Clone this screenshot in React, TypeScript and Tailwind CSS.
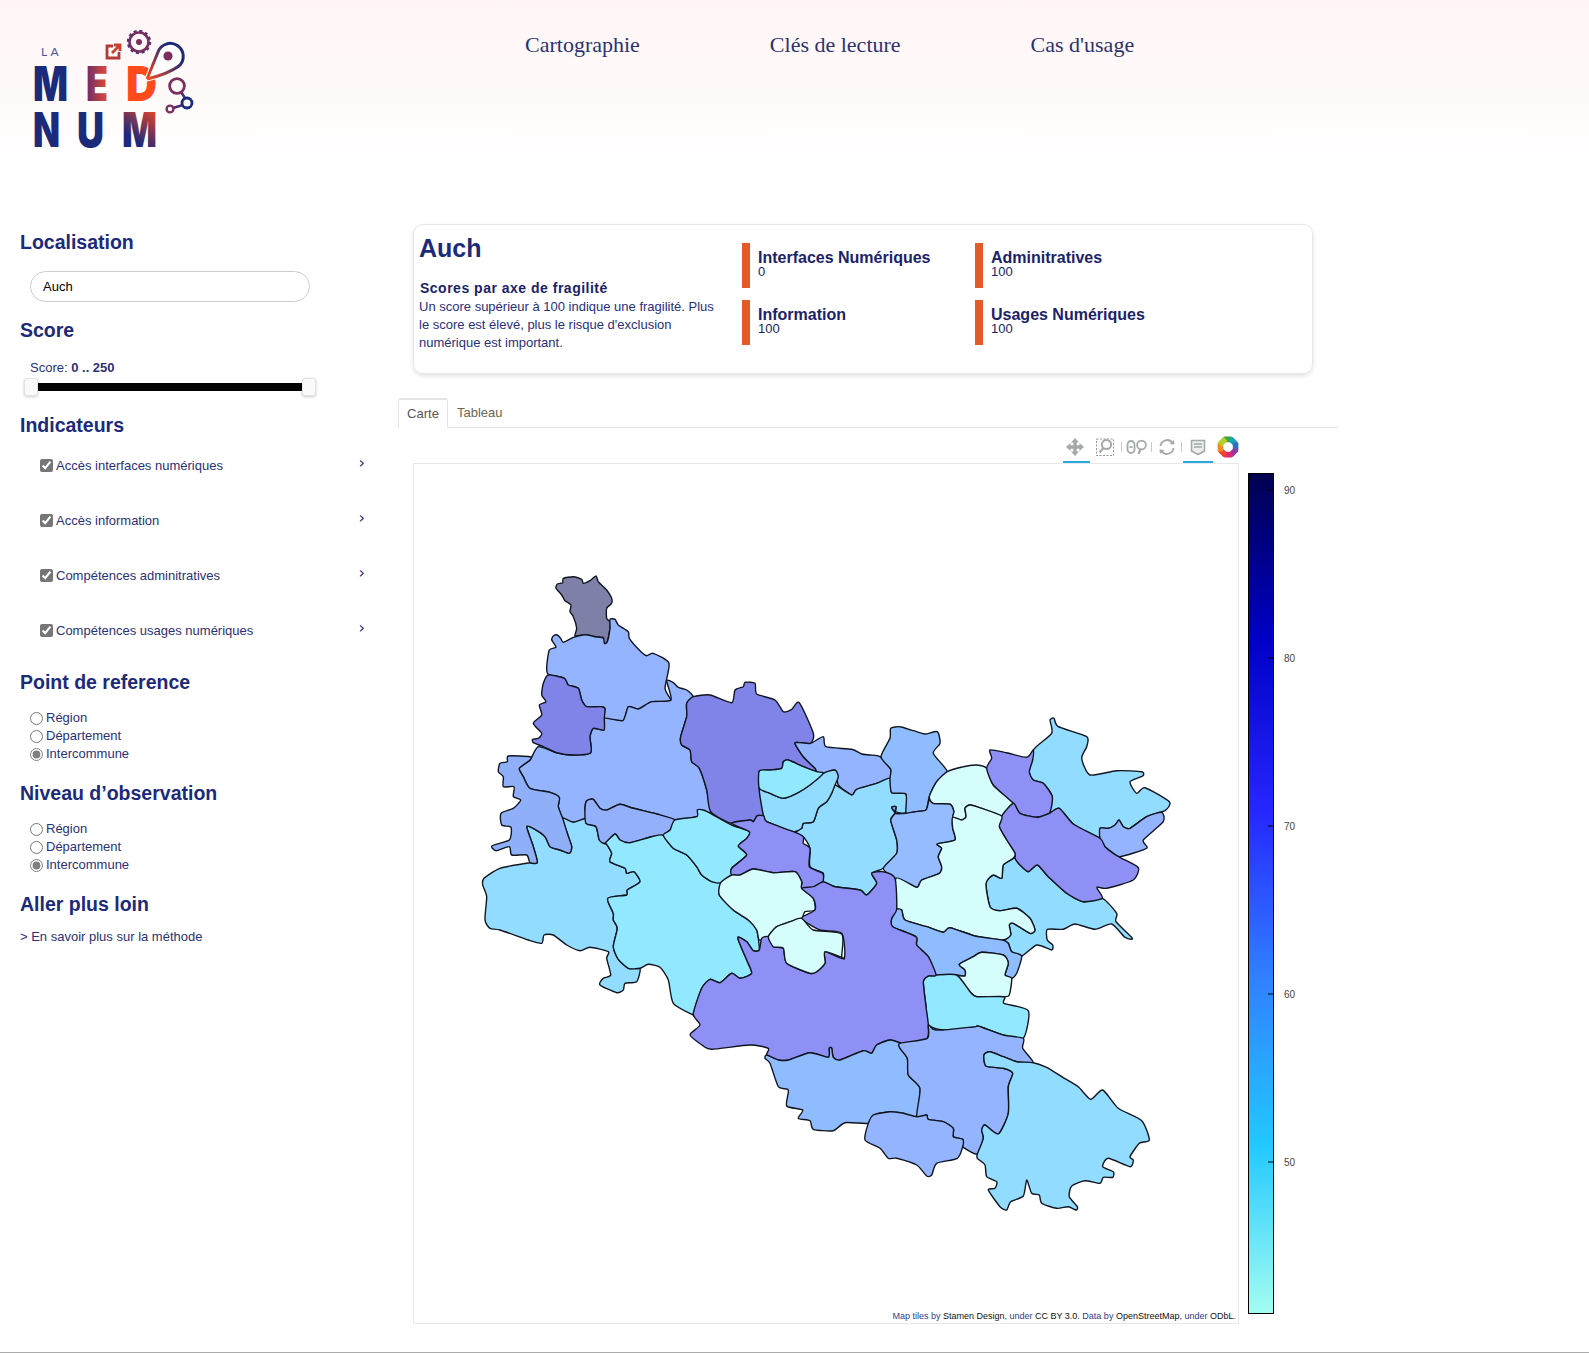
const NAVY = "text-[#1b2a7a]";

// crop origins, the outlines below were read off 3x crops
const ORIGINS: Record<string, [number, number]> = {
  a: [470, 560],
  b: [800, 700],
  c: [670, 940],
  d: [590, 920],
};

// closed Catmull-Rom through the traced points, keeps junctions on the shared borders
const toPath = (segs: [string, string][]) => {
  const pts = segs.flatMap(([crop, raw]) => {
    const [ox, oy] = ORIGINS[crop];
    return raw.split(" ").map((p) => {
      const [x, y] = p.split(",").map(Number);
      return [ox + x / 3, oy + y / 3];
    });
  });
  const n = pts.length;
  const k = 0.11;
  let d = `M${pts[0][0].toFixed(1)} ${pts[0][1].toFixed(1)}`;
  for (let i = 0; i < n; i++) {
    const p0 = pts[(i - 1 + n) % n];
    const p1 = pts[i];
    const p2 = pts[(i + 1) % n];
    const p3 = pts[(i + 2) % n];
    const c1x = p1[0] + (p2[0] - p0[0]) * k;
    const c1y = p1[1] + (p2[1] - p0[1]) * k;
    const c2x = p2[0] - (p3[0] - p1[0]) * k;
    const c2y = p2[1] - (p3[1] - p1[1]) * k;
    d += `C${c1x.toFixed(1)} ${c1y.toFixed(1)} ${c2x.toFixed(1)} ${c2y.toFixed(1)} ${p2[0].toFixed(1)} ${p2[1].toFixed(1)}`;
  }
  return d + "Z";
};

const REGIONS: { fill: string; segs: [string, string][] }[] = [
  { fill: "#7e80a8", segs: [["a", "280,55 310,50 335,58 340,70 360,62 378,48 385,65 410,90 425,115 425,130 410,145 410,175 420,185 420,205 410,250 400,245 400,232 375,230 345,224 315,228 320,205 310,170 300,155 303,135 285,122 275,105 258,85 262,72 278,68"]] },
  { fill: "#94b4ff", segs: [["a", "262,225 272,235 280,247 310,232 345,224 375,230 400,235 403,250 412,245 420,205 420,178 435,178 445,195 475,215 478,235 510,272 530,287 550,280 597,310 585,385 603,420 590,425 545,425 505,447 475,440 465,475 458,482 403,475 405,447 395,440 350,440 335,420 325,385 295,375 283,355 235,343 230,320 238,270 258,262 245,240 250,228"]] },
  { fill: "#94b4ff", segs: [["a", "205,560 260,578 310,585 362,578 360,530 370,505 402,510 403,475 458,482 475,440 505,447 545,425 603,420 590,362 610,368 625,382 650,390 670,410 650,430 650,470 632,530 635,555 660,570 665,605 688,625 710,690 722,755 680,770 615,780 560,762 490,745 450,733 410,750 390,745 370,718 350,722 345,745 347,775 310,787 278,775 265,740 268,712 240,697 180,685 160,650 148,625 180,600"]] },
  { fill: "#8084e8", segs: [["a", "235,345 283,355 295,375 325,385 335,420 350,440 395,440 405,447 403,475 402,510 370,505 360,530 362,578 310,585 260,578 220,560 190,548 188,538 205,535 215,520 190,490 215,465 208,435 228,425 215,405 220,370"]] },
  { fill: "#92dcff", segs: [["a", "170,800 195,808 225,830 240,860 270,870 298,880 305,860 292,820 278,775 310,787 347,775 348,790 378,800 388,840 410,853 425,880 420,905 465,925 470,940 492,935 510,965 472,990 470,1005 413,1015 430,1060"], ["d", "70,0 82,25 70,80 85,118 115,145 150,145 140,185 105,190 100,210 80,218 30,195 40,175 62,165 50,115 55,95 0,82"], ["a", "330,1172 290,1155 250,1125 222,1125 215,1150 175,1140 90,1110 60,1105 45,1080 50,1010 38,975 42,955 90,925 180,908 202,907 190,860"]] },
  { fill: "#8fb0f8", segs: [["a", "115,588 180,590 180,600 148,625 160,650 180,685 240,697 268,712 265,740 278,775 292,820 305,860 298,880 270,870 240,860 225,830 195,808 170,800 190,860 202,907 180,908 170,885 125,885 118,860 78,872 66,857 118,840 123,802 95,795 93,760 130,745 152,720 130,710 132,680 100,680 100,650 85,635 90,610 112,605"]] },
  { fill: "#94b0fa", segs: [["a", "345,745 350,722 370,718 390,745 410,750 450,733 490,745 560,762 615,780 600,810 580,826 545,830 480,848 450,840 435,822 405,850 388,840 378,800 348,790"]] },
  { fill: "#92e8ff", segs: [["a", "405,850 435,822 450,840 480,848 545,830 580,826 610,865 650,885 680,920 695,945 725,965 752,968 748,1005 790,1050 835,1080 860,1110 868,1170 850,1172 830,1145 803,1133"], ["c", "230,60 245,100 210,115 185,100 150,128 120,118 95,145 70,222"], ["d", "310,285 250,250 235,180 210,142 175,133 150,145 115,145 85,118 70,80 82,25 70,0"], ["a", "430,1060 413,1015 470,1005 472,990 510,965 492,935 470,940 465,925 420,905 425,880 410,853"]] },
  { fill: "#92e8ff", segs: [["a", "615,780 680,770 682,750 700,750 725,762 785,795 838,815 830,835 805,858 830,885 785,925 785,945 752,968 725,965 695,945 680,920 650,885 610,865 580,826 600,810"]] },
  { fill: "#8084e8", segs: [["a", "670,410 720,405 785,428 795,390 820,380 825,367 855,370 860,402 915,420 940,455 965,448 988,428 1030,520 1022,550 995,548 975,550 1000,590 1035,625 1040,635 1000,620 955,600 940,605 935,625 900,630 868,633 868,685 880,765 862,767 850,785 840,780 785,790 722,755 710,690 688,625 665,605 660,570 635,555 632,530 650,470 650,430"]] },
  { fill: "#94b4ff", segs: [["a", "975,550 995,548 1022,550 1060,530 1068,560 1145,568 1175,582"], ["b", "210,165 240,170 272,208 270,235 230,250 170,268 155,285 115,255 105,210 70,220 50,215"], ["a", "1035,625 1000,590"]] },
  { fill: "#92dcff", segs: [["b", "105,255 155,285 170,268 230,250 270,235 275,278 318,282 318,338 285,335 275,322 288,320 285,340 272,360 290,420 290,460 250,505 215,520 230,550 200,585 180,570 105,560 70,545 70,520 30,500 30,445 10,410 -20,395 5,385 10,370 40,365 55,325 80,305 95,280"]] },
  { fill: "#92dcff", segs: [["a", "868,685 900,700 940,715 980,700 1020,675 1060,640 1095,630 1105,650 1095,675 1085,700 1070,725 1045,745 1030,785 1000,790 995,805 970,815 890,785 880,765"]] },
  { fill: "#92e8ff", segs: [["a", "868,633 900,630 935,625 940,605 955,600 1000,620 1040,635 1060,640 1020,675 980,700 940,715 900,700 868,685"]] },
  { fill: "#8f90f6", segs: [["a", "785,790 840,780 850,785 862,767 882,768 890,785 970,815 1000,830 1000,850 1020,865 1018,920 1058,940 1058,965 1030,985 995,985 995,965 975,935 910,938 850,927 810,945 785,945 785,925 830,885 805,858 830,835 838,815"]] },
  { fill: "#d5fdfb", segs: [["a", "785,945 810,945 850,927 910,938 975,935 995,965 995,985 1030,1015 1035,1050 1005,1055 995,1075 960,1085 920,1100 895,1130 868,1140 860,1110 835,1080 790,1050 748,1005 752,968"]] },
  { fill: "#8fbcff", segs: [["b", "272,85 300,80 340,92 375,102 412,95 420,130 400,160 442,215 410,245 388,290 378,330 345,335 318,340 318,282 275,278 270,235 272,208 243,170 270,115"]] },
  { fill: "#94bcff", segs: [["b", "275,322 288,320 285,340 318,340 345,335 378,330 388,298 400,310 450,312 462,335 458,352 458,385 465,420 412,432 425,445 415,470 425,500 418,520 365,540 350,562 285,535 250,505 290,460 290,420 272,360 285,340"]] },
  { fill: "#d5fdfb", segs: [["b", "442,215 490,200 530,195 560,205 580,255 640,310 605,348 545,325 510,315 495,325 498,350 485,360 458,352 462,335 450,312 400,310 388,290 410,245"]] },
  { fill: "#92dcff", segs: [["b", "750,60 762,55 775,80 860,110 860,140 845,175 870,225 950,212 1025,215 1028,228 990,245 1010,280 1035,263 1108,305 1095,332 1040,350 990,385 970,380 957,360 945,375 925,385 900,385 900,415 820,372 778,325 748,340 757,290 730,250 700,240 688,215 700,150 755,100"]] },
  { fill: "#8f90f6", segs: [["b", "570,150 620,158 680,172 700,150 698,180 688,215 700,240 730,250 757,290 748,340 710,352 660,340 640,310 580,255 560,205 575,175"]] },
  { fill: "#94b4ff", segs: [["b", "900,385 925,385 945,375 957,360 970,380 990,385 1040,350 1085,337 1090,365 1030,420 1040,445 960,470 940,460 915,440 900,415"]] },
  { fill: "#92dcff", segs: [["b", "645,475 660,495 685,515 712,495 745,530 800,580 850,605 907,595 950,640 948,665 997,715 975,712 935,672 885,688 825,672 790,688 742,688 742,720 758,735 755,750 710,735 665,768 635,755 625,730 608,720 632,705 628,675 640,670 690,700 705,690 690,655 650,625 600,632 570,620 558,550 580,525 605,535 610,495 640,475"]] },
  { fill: "#8f90f6", segs: [["b", "640,310 660,340 710,352 748,340 778,325 820,372 900,415 915,440 940,460 965,475 1015,503 1000,540 920,565 890,562 907,595 850,605 800,580 745,530 712,495 685,515 660,495 645,475 645,460 620,420 598,380 605,348"]] },
  { fill: "#d5fdfb", segs: [["b", "458,352 485,360 498,350 495,325 510,315 545,325 605,348 598,380 620,420 645,460 640,475 610,495 605,535 580,525 558,550 570,620 600,632 650,625 690,655 705,690 690,700 640,670 628,675 632,705 608,720 525,708 450,683 430,697 380,680 315,660 305,630 290,628 288,535 350,562 365,540 418,520 425,500 415,470 425,445 412,432 465,420 458,385"]] },
  { fill: "#8fbcff", segs: [["b", "288,628 305,630 315,660 380,680 430,697 450,683 525,708 608,720 625,730 635,755 665,768 650,820 635,835 615,825 625,790 610,765 545,757 520,770 478,793 495,810 495,828 470,825 408,825 385,770 350,735 348,710 278,680 275,655"]] },
  { fill: "#d5fdfb", segs: [["b", "478,793 520,770 545,757 610,765 625,790 615,825 635,835 628,885 612,890 530,890 510,875 475,830 495,828 495,810"]] },
  { fill: "#92e8ff", segs: [["b", "408,825 470,825 510,875 530,890 612,890 612,910 685,932 670,1015 610,1005 540,980 510,985 430,990 385,975 378,920 370,845 385,828"]] },
  { fill: "#8f90f6", segs: [["b", "215,520 250,515 285,535 290,628 275,655 278,680 348,710 350,735 385,770 408,825 385,828 370,845 378,920 385,975 380,1017"], ["c", "700,310 660,300 620,315 605,340 580,332 510,360 490,352 485,325 478,325 475,352 420,338 355,360 325,360 290,345 295,325 240,315 125,328 100,318 60,285 90,255 70,222 95,145 120,118 150,128 185,100 210,115 245,100 230,60"], ["a", "803,1133 830,1145 850,1172 868,1170 875,1135 895,1130"], ["c", "310,20 340,25 350,70 420,100 440,95 465,70 465,35 522,55"], ["b", "125,700 60,690 5,655 45,630 40,595 5,565 40,560 70,545 105,560 180,570 200,585 230,550"]] },
  { fill: "#d5fdfb", segs: [["a", "895,1130 920,1100 960,1085 995,1075 1030,1110 1115,1122 1115,1190"], ["c", "522,55 465,35 465,70 440,95 420,100 350,70 340,25 310,20"]] },
  { fill: "#8fbcff", segs: [["c", "290,345 325,360 355,360 420,338 475,352 478,325 485,325 490,352 510,360 580,332 605,340 620,315 660,300 690,310 690,325 712,355 715,405 750,445 740,530 700,520 660,515 610,525 595,550 525,548 490,572 430,568 420,542 385,535 398,510 350,498 355,450 325,440 300,370 285,355"]] },
  { fill: "#94b4ff", segs: [["c", "690,310 772,295 775,255 790,268 820,270 915,260 925,258 1000,285 1060,295 1058,325 1090,368 1040,365 1000,350 960,335 942,345 948,378 1000,385 1028,400 1015,440 1015,520 985,582 945,555 935,570 940,595 922,642 878,620 878,598 850,590 850,565 820,545 775,538 770,525 740,530 750,445 715,405 712,355 690,325"]] },
  { fill: "#94b4ff", segs: [["c", "595,550 610,525 660,515 700,520 740,530 770,525 775,538 820,545 850,565 850,590 878,598 878,620 862,655 800,670 785,705 770,708 740,675 680,655 655,655 630,625 585,600"]] },
  { fill: "#92dcff", segs: [["c", "942,345 960,335 1000,350 1040,365 1090,368 1130,382 1175,410 1225,440 1262,478 1298,450 1345,505 1415,542 1438,600 1408,610 1380,650 1390,660 1380,680 1315,655 1298,680 1330,695 1328,712 1300,712 1290,730 1245,722 1205,738 1198,770 1222,800 1218,810 1195,800 1160,805 1115,790 1108,765 1085,760 1070,720 1060,768 1022,785 1010,810 990,800 955,750 975,745 980,725 950,710 945,675 922,655 922,642 940,595 935,570 945,555 985,582 1015,520 1015,440 1028,400 1000,385 948,378"]] },
];

const INDICATORS = [
  "Accès interfaces numériques",
  "Accès information",
  "Compétences adminitratives",
  "Compétences usages numériques",
];

const SCORES = [
  { title: "Interfaces Numériques", value: "0" },
  { title: "Adminitratives", value: "100" },
  { title: "Information", value: "100" },
  { title: "Usages Numériques", value: "100" },
];

const PETALS = ["#35a84a", "#1f9fb8", "#2f6fc0", "#8e3a9d", "#e0257a", "#ee4035", "#f58a1f", "#b5cf2a"];

const Logo = () => (
  <svg width="210" height="170" viewBox="0 0 210 170" className="shrink-0">
    <defs>
      <linearGradient id="e" gradientUnits="userSpaceOnUse" x1="86" y1="0" x2="110" y2="0">
        <stop offset="0" stopColor="#6a2c6c" />
        <stop offset="1" stopColor="#f0502c" />
      </linearGradient>
      <linearGradient id="m" gradientUnits="userSpaceOnUse" x1="152" y1="112" x2="132" y2="138">
        <stop offset="0" stopColor="#d8432e" />
        <stop offset="1" stopColor="#1b2a7a" />
      </linearGradient>
      <linearGradient id="pin" gradientUnits="userSpaceOnUse" x1="147" y1="79" x2="182" y2="45">
        <stop offset="0" stopColor="#ff4a1c" />
        <stop offset="0.75" stopColor="#1b2a7a" />
      </linearGradient>
    </defs>
    <text x="41" y="56" fontFamily="Lato, sans-serif" fontSize="12" letterSpacing="3.4" fill="#4a559c">
      LA
    </text>
    <g fontFamily="Inter, sans-serif" fontWeight="900" fontSize="48" fill="#1b2a7a">
      <text x="33" y="101" textLength="35" lengthAdjust="spacingAndGlyphs">M</text>
      <text x="86" y="101" textLength="22" lengthAdjust="spacingAndGlyphs" fill="url(#e)">E</text>
      <text x="126" y="101" textLength="31" lengthAdjust="spacingAndGlyphs" fill="#ff4a1c">D</text>
      <text x="33" y="147" textLength="27" lengthAdjust="spacingAndGlyphs">N</text>
      <text x="77" y="147" textLength="27" lengthAdjust="spacingAndGlyphs">U</text>
      <text x="122" y="147" textLength="35" lengthAdjust="spacingAndGlyphs" fill="url(#m)">M</text>
    </g>
    <path d="M147 79 L158 52 A13 13 0 1 1 179 66 Q168 74 147 79Z" fill="none" stroke="#fff" strokeWidth="5" />
    <path d="M147 79 L158 52 A13 13 0 1 1 179 66 Q168 74 147 79" fill="#fff" stroke="url(#pin)" strokeWidth="3" />
    <circle cx="168" cy="56" r="4.6" fill="#7a2f5f" />
    <circle cx="139" cy="42" r="9.5" fill="none" stroke="#7a2f5f" strokeWidth="2.6" />
    <circle cx="139" cy="42" r="11" fill="none" stroke="#5e2f70" strokeWidth="2.4" strokeDasharray="3 2.76" />
    <circle cx="139" cy="42" r="3" fill="#7a2f5f" />
    <path d="M113 46 H107 V58 H119 V52" fill="none" stroke="#b23a3a" strokeWidth="2.8" />
    <path d="M112 53 L119 46 M114 45 H120 V51" fill="none" stroke="#c8402f" strokeWidth="2.8" />
    <path d="M181 92 L185 98 M183 105 L173 108" stroke="#4a2c74" strokeWidth="2.6" />
    <circle cx="177" cy="86" r="7.4" fill="none" stroke="#7a2f5f" strokeWidth="2.8" />
    <circle cx="187" cy="103" r="5" fill="none" stroke="#1b2a7a" strokeWidth="2.8" />
    <circle cx="170" cy="109" r="3.4" fill="none" stroke="#7a2f5f" strokeWidth="2.4" />
  </svg>
);

const Heading = ({ label, className }: { label: string; className: string }) => (
  <h2 className={`text-[19.5px] font-bold leading-[22px] ${NAVY} ${className}`}>{label}</h2>
);

const RadioGroup = ({ name }: { name: string }) => (
  <div className="mt-[16px] ml-[10px] flex flex-col">
    {["Région", "Département", "Intercommune"].map((label) => (
      <label key={label} className="flex h-[18px] items-center text-[13px] text-[#2b3178]">
        <input
          type="radio"
          name={name}
          defaultChecked={label === "Intercommune"}
          className="m-0 mr-[3px] size-[13px] accent-[#808080]"
        />
        {label}
      </label>
    ))}
  </div>
);

const Sidebar = () => (
  <aside className="w-[398px] shrink-0 pl-5 pr-[20px] pt-[7px]">
    <Heading label="Localisation" className="" />
    <input
      defaultValue="Auch"
      className="mt-[18px] ml-[10px] block h-[31px] w-[280px] rounded-full border border-[#cccccc] px-3 text-[13px] text-black outline-none"
    />
    <Heading label="Score" className="mt-[17px]" />
    <div className="mt-[19px] ml-[10px] text-[13px] leading-4 text-[#2b3178]">
      Score: <span className="font-bold">0 .. 250</span>
    </div>
    <div className="mt-[2px] ml-[4px] flex h-[18px] w-[292px] items-center">
      <span className="h-[18px] w-[14px] shrink-0 rounded-[3px] border border-[#e2e2e2] bg-[#fafafa] shadow-[0_1px_3px_rgba(0,0,0,0.2)]" />
      <span className="h-2 flex-1 bg-black" />
      <span className="h-[18px] w-[14px] shrink-0 rounded-[3px] border border-[#e2e2e2] bg-[#fafafa] shadow-[0_1px_3px_rgba(0,0,0,0.2)]" />
    </div>
    <Heading label="Indicateurs" className="mt-[18px]" />
    <div className="mt-[2px] flex flex-col">
      {INDICATORS.map((label) => (
        <div key={label} className="flex h-[55px] items-center pl-5 text-[13px] text-[#2b3178]">
          <input type="checkbox" defaultChecked className="m-0 mr-[3px] size-[13px] accent-[#767676]" />
          <span>{label}</span>
          <span className="mb-[6px] ml-auto mr-[13px] font-['DejaVu_Sans',sans-serif] text-[16px] leading-none">›</span>
        </div>
      ))}
    </div>
    <Heading label="Point de reference" className="mt-[13px]" />
    <RadioGroup name="reference" />
    <Heading label="Niveau d’observation" className="mt-[19px]" />
    <RadioGroup name="observation" />
    <Heading label="Aller plus loin" className="mt-[19px]" />
    <p className="mt-[14px] text-[13px] leading-4 text-[#2b3178]">&gt; En savoir plus sur la méthode</p>
  </aside>
);

const ScoreCard = () => (
  <section className="ml-[15px] flex h-[150px] w-[900px] rounded-[10px] border border-[#e8e8e8] shadow-[0_2px_4px_rgba(0,0,0,0.12)]">
    <div className="w-[328px] shrink-0 pl-[5px] pt-2">
      <h1 className={`text-[25px] font-bold leading-[30px] ${NAVY}`}>Auch</h1>
      <h3 className="ml-px mt-[16px] text-[14px] font-bold leading-[18px] tracking-[0.5px] text-[#1a2368]">
        Scores par axe de fragilité
      </h3>
      <p className="mt-[1px] w-[298px] text-[13px] leading-[18px] text-[#28307a]">
        Un score supérieur à 100 indique une fragilité. Plus le score est élevé, plus le risque d'exclusion numérique est
        important.
      </p>
    </div>
    <div className="grid flex-1 grid-cols-[233px_1fr] content-start gap-y-3 pt-[18px]">
      {SCORES.map((score) => (
        <div key={score.title} className="flex h-[45px]">
          <span className="w-2 shrink-0 bg-[#e55a27]" />
          <div className="pl-2 pt-[7px]">
            <div className="text-[16px] font-bold leading-4 text-[#1a2368]">{score.title}</div>
            <div className="text-[13px] leading-[11px] text-[#1a2368]">{score.value}</div>
          </div>
        </div>
      ))}
    </div>
  </section>
);

const Tabs = () => (
  <div className="mt-[24px] flex h-[30px] w-[940px] items-end border-b border-[#e5e5e5] text-[13px]">
    <div className="mb-[-1px] flex h-[30px] w-[50px] items-center justify-center rounded-t-[3px] border border-b-white border-[#e5e5e5] border-t-2 bg-white text-[#555555]">
      Carte
    </div>
    <div className="flex h-[29px] items-center pl-[9px] text-[#6b6552]">Tableau</div>
  </div>
);

const Sep = () => <span className="mx-[1px] mb-[2px] h-[10px] w-px self-center bg-[#c8c8c8]" />;

const ToolButton = ({ active, className, children }: { active?: boolean; className: string; children: React.ReactNode }) => (
  <div className={`flex h-[30px] items-center justify-center border-b-2 ${className} ${active ? "border-[#26aae1]" : "border-transparent"}`}>
    {children}
  </div>
);

const Toolbar = () => (
  <div className="ml-[665px] mt-[5px] flex h-[30px] text-[#a4a9a9]">
    <ToolButton active className="w-[27px] pr-1">
      <svg width="20" height="20" viewBox="0 0 20 20" fill="#a4a9a9">
        <path d="M10 1 L14 5.5 H11.7 V8.3 H14.5 V6 L19 10 L14.5 14 V11.7 H11.7 V14.5 H14 L10 19 L6 14.5 H8.3 V11.7 H5.5 V14 L1 10 L5.5 6 V8.3 H8.3 V5.5 H6Z" />
      </svg>
    </ToolButton>
    <ToolButton className="w-[30px]">
      <svg width="20" height="20" viewBox="0 0 20 20" fill="none" stroke="#a4a9a9">
        <rect x="1.5" y="2" width="17" height="16.5" strokeDasharray="2 1.5" stroke="#909595" />
        <circle cx="11.5" cy="7.5" r="4.6" strokeWidth="2" />
        <path d="M8.5 11 L4.5 15.5" strokeWidth="2.2" />
      </svg>
    </ToolButton>
    <Sep />
    <ToolButton className="w-[27px]">
      <svg width="22" height="18" viewBox="0 0 22 18" fill="none" stroke="#a4a9a9" strokeWidth="1.8">
        <rect x="1.5" y="3" width="7" height="12" rx="3.5" />
        <path d="M3.5 9 H6.5" />
        <circle cx="15.5" cy="7" r="4.4" />
        <path d="M14.5 11 L12.5 16" strokeWidth="2.2" />
      </svg>
    </ToolButton>
    <Sep />
    <ToolButton className="w-[27px]">
      <svg width="18" height="18" viewBox="0 0 18 18" fill="none" stroke="#a4a9a9" strokeWidth="1.9">
        <path d="M2.5 8 A6.6 6.6 0 0 1 14.5 5" />
        <path d="M15.5 10 A6.6 6.6 0 0 1 3.5 13" />
        <path d="M11.5 6 L16.5 6.5 L16 2Z" fill="#a4a9a9" stroke="none" />
        <path d="M6.5 12 L1.5 11.5 L2 16Z" fill="#a4a9a9" stroke="none" />
      </svg>
    </ToolButton>
    <Sep />
    <ToolButton active className="w-[30px]">
      <svg width="16" height="17" viewBox="0 0 16 17" fill="none">
        <path d="M1.5 1.5 H14.5 V12 L8 15.5 L1.5 12Z" fill="#eceeee" stroke="#a4a9a9" strokeWidth="1.6" strokeLinejoin="round" />
        <path d="M4 5 H12 M4 8 H12" stroke="#a4a9a9" strokeWidth="1.4" />
      </svg>
    </ToolButton>
    <div className="flex h-[30px] w-[30px] items-center justify-center pb-[2px]">
      <svg width="22" height="22" viewBox="0 0 22 22">
        {PETALS.map((color, i) => (
          <rect
            key={color}
            x="6.6"
            y="0.6"
            width="8.4"
            height="5.6"
            rx="1"
            fill={color}
            transform={`rotate(${i * 45} 11 11)`}
          />
        ))}
      </svg>
    </div>
  </div>
);

const ChoroplethMap = () => (
  <div className="relative h-[861px] w-[826px] shrink-0 border border-[#e8e8e8]">
    <svg width="824" height="859" viewBox="414 464 824 859" className="block">
      {REGIONS.map((region, i) => (
        <path
          key={i}
          d={toPath(region.segs)}
          fill={region.fill}
          stroke="#10151f"
          strokeWidth="1.4"
          strokeLinejoin="round"
        />
      ))}
    </svg>
    <p className="absolute bottom-[1px] right-[2px] whitespace-nowrap text-[9px] leading-[12px] text-[#111111]">
      <span className="text-[#2f3a8f]">Map tiles by </span>Stamen Design<span className="text-[#2f3a8f]">, under </span>CC
      BY 3.0<span className="text-[#2f3a8f]">. Data by </span>OpenStreetMap<span className="text-[#2f3a8f]">, under </span>
      ODbL<span className="text-[#2f3a8f]">.</span>
    </p>
  </div>
);

const ColorBar = () => (
  <svg width="60" height="850" viewBox="0 0 60 850" className="ml-[9px] mt-[10px] shrink-0">
    <defs>
      <linearGradient id="ramp" x1="0" y1="0" x2="0" y2="1">
        <stop offset="0" stopColor="#000050" />
        <stop offset="0.2" stopColor="#0000c8" />
        <stop offset="0.4" stopColor="#2626ff" />
        <stop offset="0.6" stopColor="#3080ff" />
        <stop offset="0.8" stopColor="#22c8ff" />
        <stop offset="1" stopColor="#a4fdf2" />
      </linearGradient>
    </defs>
    <rect x="0.5" y="0.5" width="25" height="840" fill="url(#ramp)" stroke="#000" />
    {[
      ["90", 17],
      ["80", 185],
      ["70", 353],
      ["60", 521],
      ["50", 689],
    ].map(([label, y]) => (
      <g key={label}>
        <path d={`M20 ${y} H25.5`} stroke="#000" />
        <text x="36" y={Number(y) + 4} fontSize="10" fill="#444" fontFamily="'Liberation Sans', sans-serif">
          {label}
        </text>
      </g>
    ))}
  </svg>
);

export default function App() {
  return (
    <div className="h-[1353px] border-b border-[#aaaaaa] bg-white font-['Liberation_Sans',Arial,sans-serif]">
      <header className="flex h-[224px] items-start bg-[linear-gradient(#fff5f5,#ffffff_175px)]">
        <Logo />
        <nav className="ml-[315px] mt-[31px] flex gap-[130px] font-['Liberation_Serif',serif] text-[22px] leading-7 text-[#2c3270]">
          <a>Cartographie</a>
          <a>Clés de lecture</a>
          <a>Cas d'usage</a>
        </nav>
      </header>
      <div className="flex">
        <Sidebar />
        <main className="min-w-0 flex-1">
          <ScoreCard />
          <Tabs />
          <Toolbar />
          <div className="ml-[15px] flex">
            <ChoroplethMap />
            <ColorBar />
          </div>
        </main>
      </div>
    </div>
  );
}
